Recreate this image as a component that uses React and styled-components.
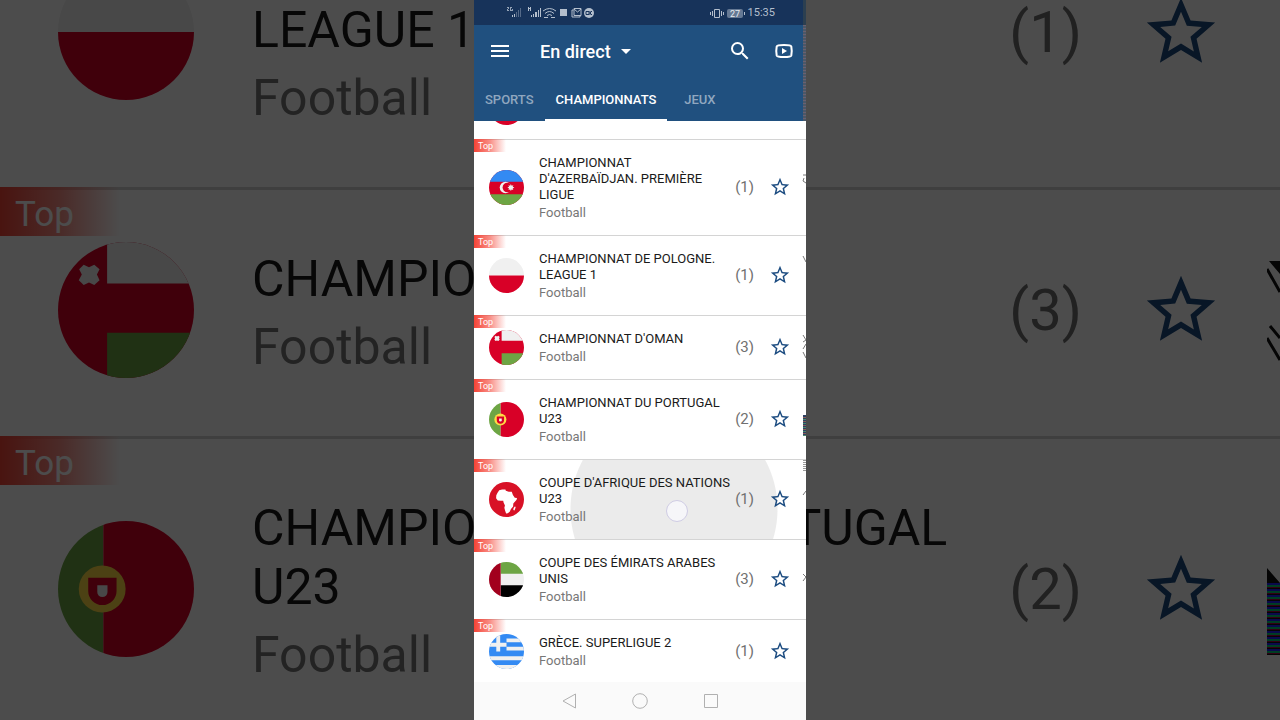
import styled, { createGlobalStyle, ThemeProvider } from 'styled-components'
import { MdArrowDropDown, MdMenu, MdSearch, MdStarBorder } from 'react-icons/md'

const GlobalStyle = createGlobalStyle`
  * {
    box-sizing: border-box;
  }

  body {
    margin: 0;
    background-color: #4c4c4c;
    font-family: Roboto, 'Liberation Sans', sans-serif;
  }

  button {
    display: flex;
    align-items: center;
    justify-content: center;
    padding: 0;
    border: 0;
    background: none;
    color: inherit;
    font-family: inherit;
    cursor: pointer;
  }
`

// the same rows are drawn twice: in the phone, and enlarged behind it
const phone = {
  edge: 15,
  gap: 15,
  flag: 35,
  name: 13,
  nameLine: 16,
  sport: 13,
  sportLine: 20,
  top: 15,
  bottom: 11,
  rowBottom: 1,
  count: 15,
  star: 22,
  border: 1,
  badge: 9,
  badgeWidth: 32,
  badgeHeight: 13,
  badgeEdge: 4,
}

const enlarged = {
  edge: 58,
  gap: 58,
  flag: 136,
  name: 50,
  nameLine: 59,
  sport: 50,
  sportLine: 77,
  top: 60,
  bottom: 44,
  rowBottom: 6,
  count: 58,
  star: 82,
  border: 3,
  badge: 35,
  badgeWidth: 120,
  badgeHeight: 49,
  badgeEdge: 15,
}

const Stage = styled.div`
  display: flex;
  justify-content: center;
  position: relative;
  height: 100vh;
  overflow: hidden;
`

const Backdrop = styled.div`
  position: absolute;
  inset: 0;
  overflow: hidden;
  background-color: #fff;

  &::after {
    content: '';
    position: absolute;
    inset: 0;
    background-color: rgba(0, 0, 0, 0.7);
  }
`

const Phone = styled.main`
  display: flex;
  flex-direction: column;
  position: relative;
  width: 332px;
  height: 100%;
  background-color: #fff;
`

const EdgeNoise = styled.svg`
  position: absolute;
  top: 0;
  right: 0;
  pointer-events: none;
`

const StatusBar = styled.div`
  display: flex;
  align-items: center;
  justify-content: space-between;
  height: 25px;
  padding: 0 31px 0 32px;
  background-color: #17335a;
  color: #b4bfcd;
  font-size: 11px;
`

const StatusGroup = styled.div`
  display: flex;
  align-items: center;
  gap: 2px;
`

const Header = styled.header`
  background-color: #20507f;
  color: #fff;
`

const Toolbar = styled.div`
  display: flex;
  align-items: center;
  height: 52px;
  padding: 0 10px 0 14px;
`

const Title = styled.h1`
  margin: 0;
  font-size: 18px;
  font-weight: 500;
`

const Picker = styled.button`
  gap: 3px;
  margin-left: 28px;
  margin-right: auto;
`

const IconButton = styled.button`
  width: 24px;
  height: 24px;
  font-size: 24px;
`

const Actions = styled.div`
  display: flex;
  gap: 20px;
`

const Tabs = styled.nav`
  display: flex;
  height: 44px;
`

const Tab = styled.button`
  min-width: 65px;
  padding: 2px 11px 0;
  border-bottom: 2px solid ${props => props.$active ? '#fff' : 'transparent'};
  color: ${props => props.$active ? '#fff' : '#90a7bf'};
  font-size: 13px;
  font-weight: 500;
  text-transform: uppercase;
`

const Viewport = styled.section`
  flex: 1;
  min-height: 0;
  overflow: hidden;
`

const List = styled.ul`
  margin: ${props => -props.$scrolled}px 0 0;
  padding: 0;
  list-style: none;
`

const Row = styled.li`
  display: flex;
  align-items: center;
  position: relative;
  padding: 0 ${props => props.theme.edge}px ${props => props.theme.rowBottom}px;
  border-top: ${props => props.theme.border}px solid #d4d4d4;
  background: ${props => props.$pressed
    ? 'radial-gradient(circle at 200px 49px, #ebebeb 103px, #fff 104px)'
    : '#fff'};
`

const TopBadge = styled.span`
  position: absolute;
  top: ${props => -props.theme.border}px;
  left: 0;
  width: ${props => props.theme.badgeWidth}px;
  height: ${props => props.theme.badgeHeight}px;
  padding: ${props => props.theme.border}px 0 0 ${props => props.theme.badgeEdge}px;
  background-image: linear-gradient(90deg, #f44336, rgba(244, 67, 54, 0.6) 50%, rgba(244, 67, 54, 0));
  color: #fff;
  font-size: ${props => props.theme.badge}px;
  line-height: ${props => props.theme.badgeHeight}px;
`

const FlagIcon = styled.svg`
  flex: none;
  width: ${props => props.theme.flag}px;
  height: ${props => props.theme.flag}px;
  border-radius: 50%;
`

const Texts = styled.div`
  flex: 1;
  padding: ${props => props.theme.top}px 0 ${props => props.theme.bottom}px;
  margin-left: ${props => props.theme.gap}px;
`

const Name = styled.h2`
  margin: 0;
  color: #1a1a1a;
  font-size: ${props => props.theme.name}px;
  font-weight: 400;
  line-height: ${props => props.theme.nameLine}px;
  text-transform: uppercase;
  white-space: pre;
`

const Sport = styled.p`
  margin: 0;
  color: #777;
  font-size: ${props => props.theme.sport}px;
  line-height: ${props => props.theme.sportLine}px;
`

const Count = styled.span`
  color: #707070;
  font-size: ${props => props.theme.count}px;
`

const Star = styled.button`
  margin-left: ${props => props.theme.gap}px;
  color: #1b4b80;
  font-size: ${props => props.theme.star}px;
`

const Touch = styled.span`
  position: absolute;
  top: 40px;
  left: 192px;
  width: 22px;
  height: 22px;
  border: 1px solid #cfcce4;
  border-radius: 50%;
  background-color: #f6f6f9;
`

const SystemNav = styled.nav`
  display: flex;
  align-items: center;
  justify-content: center;
  gap: 47px;
  height: 38px;
  background-color: #fafafa;
  color: #b0b0b0;
`

const flags = {
  austria: <>
    <path fill="#f0f0f0" d="M0 0h36v36H0z" />
    <path fill="#d80027" d="M0 0h36v12H0zM0 24h36v12H0z" />
  </>,
  azerbaijan: <>
    <path fill="#d80027" d="M0 0h36v36H0z" />
    <path fill="#338af3" d="M0 0h36v12H0z" />
    <path fill="#6da544" d="M0 25h36v11H0z" />
    <circle cx="17" cy="18" r="6" fill="#f0f0f0" />
    <circle cx="19" cy="18" r="5" fill="#d80027" />
    <path fill="#f0f0f0" d="M22.500 14.500l.8 1.700 1.800-.6-.7 1.700 1.700.8-1.700.8.6 1.700-1.700-.6-.8 1.700-.8-1.700-1.700.6.600-1.700-1.700-.8 1.700-.8-.6-1.700 1.700.6z" />
  </>,
  poland: <>
    <path fill="#f0f0f0" d="M0 0h36v18H0z" />
    <path fill="#d80027" d="M0 18h36v18H0z" />
  </>,
  oman: <>
    <path fill="#d80027" d="M0 0h36v36H0z" />
    <path fill="#f0f0f0" d="M13 0h23v11H13z" />
    <path fill="#6da544" d="M13 24h23v12H13z" />
    <path fill="#f0f0f0" d="M5.600 7.200l1.200-1.200 1.400.7 1.400-.7L11 7.200l-.7 1.400.7 1.500-1.400 1.300-1.400-.7-1.400.7-1.300-1.300.8-1.500z" />
  </>,
  portugal: <>
    <path fill="#6da544" d="M0 0h12v36H0z" />
    <path fill="#d80027" d="M12 0h24v36H12z" />
    <circle cx="11.700" cy="18" r="6.200" fill="#ffda44" />
    <path fill="#d80027" d="M8 15h7.500v3.500a3.700 3.700 0 0 1-7.500 0z" />
    <path fill="#f0f0f0" d="M10.400 17h2.700v1.800a1.300 1.300 0 0 1-2.700 0z" />
  </>,
  africa: <>
    <path fill="#d81126" d="M0 0h36v36H0z" />
    <path fill="#fff" d="M10.500 8.600l3-1 3.400.2.400 1.300 3 .8 3.100.1 1.200 3.300 1.900 3 2.300.2-.4 1.700-3.400 4-.2 3-2.200 2.500-1.300 3-2 1.400-1.700.2-1.100-2.900-.7-3 .6-2.200-1.400-3.200-.4-1.700-2.600-.1-3-.2-1.700-2.200.2-3.100 1.300-2.700zM26.800 25l.6 1.200-1.200 3-1.200-.4.300-2z" />
  </>,
  emirates: <>
    <path fill="#f0f0f0" d="M0 0h36v36H0z" />
    <path fill="#6da544" d="M12 0h24v12H12z" />
    <path d="M12 24h24v12H12z" />
    <path fill="#a2001d" d="M0 0h12v36H0z" />
  </>,
  greece: <>
    <path fill="#338af3" d="M0 0h36v36H0z" />
    <path stroke="#f0f0f0" strokeWidth="4" d="M18 6.500h18M18 15h18M0 25h36M0 34h36M0 11h18M9.500 0v18" />
  </>,
}

const championships = [
  { flag: 'austria', name: "Championnat d'Autriche", count: 1 },
  { flag: 'azerbaijan', name: "Championnat\nd'Azerbaïdjan. Première\nLigue", count: 1 },
  { flag: 'poland', name: 'Championnat de Pologne.\nLeague 1', count: 1 },
  { flag: 'oman', name: "Championnat d'Oman", count: 3 },
  { flag: 'portugal', name: 'Championnat du Portugal\nU23', count: 2 },
  { flag: 'africa', name: "Coupe d'Afrique des Nations\nU23", count: 1, pressed: true },
  { flag: 'emirates', name: 'Coupe des Émirats arabes\nUnis', count: 3 },
  { flag: 'greece', name: 'Grèce. Superligue 2', count: 1 },
]

function Championship({ flag, name, count, pressed }) {
  return <Row $pressed={pressed}>
    <TopBadge>Top</TopBadge>
    <FlagIcon viewBox="0 0 36 36" aria-hidden="true">{flags[flag]}</FlagIcon>
    <Texts>
      <Name>{name}</Name>
      <Sport>Football</Sport>
    </Texts>
    <Count>({count})</Count>
    <Star aria-label="Ajouter aux favoris"><MdStarBorder /></Star>
    {pressed && <Touch />}
  </Row>
}

function StatusIcons() {
  return <svg width="90" height="14" viewBox="0 0 90 14" fill="currentColor" aria-hidden="true">
    <path d="M1 1h2v2H2v1h1v1H1V3h1V2H1zM4 1h2v1H5v2h1V3h1v2H4z" opacity=".8" />
    <path d="M6 9h1v2H6zM8 8h1v3H8z" />
    <path d="M10 6h1v5h-1zM12 4h1v7h-1zM14 2h1v9h-1z" opacity=".4" />
    <path d="M22 1h1v1h1V1h1v4h-1V3h-1v2h-1zM25 9h1v2h-1zM27 8h1v3h-1zM29 6h2v5h-2zM32 4h1v7h-1zM34 2h1v9h-1z" />
    <g fill="none" stroke="currentColor">
      <path d="M37 5q6.500-5 13 0M39 7.500q4.500-4 9 0M41 9.500q2.500-2 5 0M38 11.500h4M45 11.500h4" />
      <path d="M67.500 4h-1.500v7h8V9.500" />
      <path d="M68 2.500h7v7h-7zM68 3l3.500 3L75 3" />
    </g>
    <path d="M54 3h7v7h-7z" />
    <circle cx="83" cy="7" r="5" />
    <path d="M80 5.500h3v3h-3zM84 5v4M84 7l2-2M84 7l2 2" fill="none" stroke="#17335a" />
  </svg>
}

function BatteryIcons() {
  return <svg width="36" height="14" viewBox="0 0 36 14" aria-hidden="true">
    <path d="M4.500 3.500h5v8h-5zM2.500 5v5M11.500 5v5M.500 6v3M13.500 6v3" fill="none" stroke="currentColor" />
    <rect x="17" y="3" width="16" height="9" rx="2" fill="currentColor" opacity=".5" />
    <path d="M34 6h1v3h-1z" fill="currentColor" />
    <text x="20" y="11" fontSize="9" fill="#e6ebf0">27</text>
  </svg>
}

// broken pixels along the right edge of the recording
function PhoneNoise() {
  return <EdgeNoise width="4" height="720" viewBox="0 0 4 720" fill="none" aria-hidden="true">
    <path stroke="#2c3f50" strokeWidth="3" d="M2.500 0v25" />
    <path stroke="#4a5868" strokeWidth="3" d="M2.500 25v96" />
    <path stroke="#6b6070" strokeWidth="3" strokeDasharray="1 2" d="M2.500 25v96" />
    <path stroke="#777" d="M1 175h3M2 178l-1 3 3 2M1 256l3 6M1 335l3 5-3 2M4 344l-3 5M1 352l3 6M1 495l3-4M1 574l3 3-3 4" />
    <path stroke="#999" strokeDasharray="1 1" strokeWidth="3" d="M2.500 460v12" />
    <path stroke="#2d4064" strokeWidth="3" d="M2.500 415v21" />
    <path stroke="#8a5f55" strokeWidth="3" strokeDasharray="1 3" d="M2.500 417v19" />
    <path stroke="#4d8a68" strokeWidth="3" strokeDasharray="1 3" d="M2.500 419v17" />
  </EdgeNoise>
}

function BackdropNoise() {
  return <EdgeNoise width="13" height="720" viewBox="0 0 13 720" fill="none" aria-hidden="true">
    <path fill="#111" d="M2 261h11v13zM0 568l13 15v72H0z" />
    <path stroke="#111" strokeWidth="3" d="M0 269l13 23M3 326l10 12M0 338l13 22" />
    <path stroke="#22f" strokeWidth="13" strokeDasharray="2 4" d="M6.500 583v72" />
    <path stroke="#0c7" strokeWidth="13" strokeDasharray="2 4" d="M6.500 585v70" />
    <path stroke="#a04" strokeWidth="13" strokeDasharray="1 5" d="M6.500 587v68" />
  </EdgeNoise>
}

function App() {
  return <Stage>
    <GlobalStyle />
    <ThemeProvider theme={enlarged}>
      <Backdrop aria-hidden="true">
        <List $scrolled={121}>
          {championships.slice(2, 5).map(item => <Championship key={item.name} {...item} />)}
        </List>
        <BackdropNoise />
      </Backdrop>
    </ThemeProvider>
    <ThemeProvider theme={phone}>
      <Phone>
        <StatusBar>
          <StatusIcons />
          <StatusGroup>
            <BatteryIcons />
            <span>15:35</span>
          </StatusGroup>
        </StatusBar>
        <Header>
          <Toolbar>
            <IconButton aria-label="Menu"><MdMenu /></IconButton>
            <Picker>
              <Title>En direct</Title>
              <MdArrowDropDown size={24} />
            </Picker>
            <Actions>
              <IconButton aria-label="Rechercher"><MdSearch /></IconButton>
              <IconButton aria-label="Vidéo">
                <svg width="24" height="24" viewBox="0 0 24 24" fill="none" stroke="currentColor" strokeWidth="2">
                  <path d="M12 6c5 0 7 .2 7.300 1.500.5 2.500.5 6.500 0 9C19 17.800 17 18 12 18s-7-.2-7.300-1.500c-.5-2.500-.5-6.500 0-9C5 6.200 7 6 12 6z" />
                  <path d="M10 9v6l5-3z" fill="currentColor" stroke="none" />
                </svg>
              </IconButton>
            </Actions>
          </Toolbar>
          <Tabs>
            <Tab>Sports</Tab>
            <Tab $active>Championnats</Tab>
            <Tab>Jeux</Tab>
          </Tabs>
        </Header>
        <Viewport>
          <List $scrolled={46}>
            {championships.map(item => <Championship key={item.name} {...item} />)}
          </List>
        </Viewport>
        <SystemNav>
          <IconButton aria-label="Retour">
            <svg width="16" height="16" viewBox="0 0 16 16" fill="none" stroke="currentColor"><path d="M14.500 1v14L2 8z" /></svg>
          </IconButton>
          <IconButton aria-label="Accueil">
            <svg width="16" height="16" viewBox="0 0 16 16" fill="none" stroke="currentColor"><circle cx="8" cy="8" r="7.300" /></svg>
          </IconButton>
          <IconButton aria-label="Récents">
            <svg width="16" height="16" viewBox="0 0 16 16" fill="none" stroke="currentColor"><path d="M1.500 1.500h13v13h-13z" /></svg>
          </IconButton>
        </SystemNav>
        <PhoneNoise />
      </Phone>
    </ThemeProvider>
  </Stage>
}

export default App
